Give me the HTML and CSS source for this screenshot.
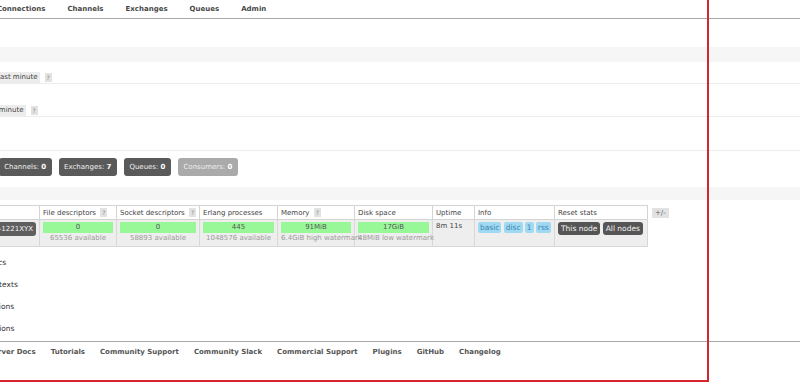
FILE: index.html
```html
<!DOCTYPE html>
<html lang="en">
<head>
    <meta charset="UTF-8">
    <title>RabbitMQ Management</title>
    <link rel="stylesheet" href="styles.css">
</head>
<body>
    <div class="page">
        <!-- top menu -->
        <ul class="menu">
            <li>Overview</li>
            <li>Connections</li>
            <li>Channels</li>
            <li>Exchanges</li>
            <li>Queues</li>
            <li>Admin</li>
        </ul>

        <h2 class="band band-totals">Totals</h2>

        <div class="chart chart-queued">
            <span class="chart-title">Queued messages last minute</span>
            <span class="help">?</span>
        </div>
        <div class="chart chart-rates">
            <span class="chart-title">Message rates last minute</span>
            <span class="help">?</span>
        </div>
        <div class="chart chart-counts"></div>

        <!-- global counts -->
        <div class="counts">
            <span class="badge">Connections: <b>0</b></span>
            <span class="badge">Channels: <b>0</b></span>
            <span class="badge">Exchanges: <b>7</b></span>
            <span class="badge">Queues: <b>0</b></span>
            <span class="badge badge-off">Consumers: <b>0</b></span>
        </div>

        <h2 class="band band-nodes">Nodes</h2>

        <div class="nodes">
            <table>
                <colgroup>
                    <col class="c-name">
                    <col class="c-77">
                    <col class="c-83">
                    <col class="c-78">
                    <col class="c-77">
                    <col class="c-78">
                    <col class="c-42">
                    <col class="c-80">
                    <col class="c-93">
                </colgroup>
                <tr class="head">
                    <th>Name</th>
                    <th>File descriptors <span class="help">?</span></th>
                    <th>Socket descriptors <span class="help">?</span></th>
                    <th>Erlang processes</th>
                    <th>Memory <span class="help">?</span></th>
                    <th>Disk space</th>
                    <th>Uptime</th>
                    <th>Info</th>
                    <th>Reset stats</th>
                </tr>
                <tr class="row">
                    <td class="name"><span class="node">rabbit@DESKTOP-1221XYX</span></td>
                    <td><div class="bar">0</div><div class="sub">65536 available</div></td>
                    <td><div class="bar">0</div><div class="sub">58893 available</div></td>
                    <td><div class="bar">445</div><div class="sub">1048576 available</div></td>
                    <td><div class="bar">91MiB</div><div class="sub">6.4GiB high watermark</div></td>
                    <td><div class="bar">17GiB</div><div class="sub">48MiB low watermark</div></td>
                    <td class="plain">8m 11s</td>
                    <td class="plain">
                        <span class="tag">basic</span>
                        <span class="tag">disc</span>
                        <span class="tag">1</span>
                        <span class="tag">rss</span>
                    </td>
                    <td class="plain">
                        <span class="btn">This node</span>
                        <span class="btn">All nodes</span>
                    </td>
                </tr>
            </table>
            <span class="toggle">+/-</span>
        </div>

        <!-- collapsed sections -->
        <div class="sections">
            <h2>Churn statistics</h2>
            <h2>Ports and contexts</h2>
            <h2>Export definitions</h2>
            <h2>Import definitions</h2>
        </div>

        <div class="footer">
            <a>HTTP API</a>
            <a>Server Docs</a>
            <a>Tutorials</a>
            <a>Community Support</a>
            <a>Community Slack</a>
            <a>Commercial Support</a>
            <a>Plugins</a>
            <a>GitHub</a>
            <a>Changelog</a>
        </div>
    </div>

    <!-- red highlight frame drawn over the screenshot -->
    <div class="frame"></div>
</body>
</html>
```

FILE: styles.css
```css
body {
    font-family: "DejaVu Sans", Verdana, sans-serif;
    font-size: 7px;
    color: #444;
    background: #fff;
    margin: 0;
    width: 800px;
    height: 385px;
    overflow: hidden;
    position: relative;
}
.page {
    margin-left: -100px;
    width: 900px;
}
.menu {
    list-style: none;
    margin: 0;
    padding: 0 0 0 38px;
    height: 18px;
    line-height: 18px;
    border-bottom: 1px solid #a8a8a8;
    display: flex;
    gap: 22px;
    font-weight: bold;
    color: #484848;
}
.band {
    margin: 0;
    font-size: 8px;
    font-weight: normal;
    background: #f6f6f6;
    padding-left: 10px;
}
.band-totals {
    margin-top: 28px;
    height: 15px;
    line-height: 15px;
}
.chart {
    border-bottom: 1px solid #ececec;
    padding-left: 29px;
    line-height: 12px;
    display: flex;
    align-items: center;
    gap: 5px;
}
.chart-queued {
    padding-top: 9px;
    height: 12px;
}
.chart-rates {
    padding-top: 20px;
    height: 12px;
}
.chart-counts {
    height: 33px;
}
.chart-title {
    background: #ececec;
    padding: 0 2px;
    line-height: 11px;
}
.help {
    display: inline-block;
    background: #e2e2e2;
    color: #888;
    font-size: 6px;
    line-height: 9px;
    padding: 0 2px;
    font-weight: normal;
}
.counts {
    margin-top: 7px;
    padding-left: 28px;
    display: flex;
    gap: 7px;
}
.badge {
    background: #5a5a5a;
    color: #eee;
    line-height: 18px;
    padding: 0 5.5px;
    border-radius: 3px;
}
.badge b {
    color: #fff;
}
.badge-off {
    background: #aaa;
}
.band-nodes {
    margin-top: 11px;
    height: 13px;
    line-height: 13px;
}
.nodes {
    margin-top: 5px;
    padding-left: 20px;
    display: flex;
    align-items: flex-start;
    gap: 4px;
}
table {
    border-collapse: collapse;
    table-layout: fixed;
    width: 727px;
}
.c-name { width: 119px; }
.c-77 { width: 77px; }
.c-83 { width: 83px; }
.c-78 { width: 78px; }
.c-42 { width: 42px; }
.c-80 { width: 80px; }
.c-93 { width: 93px; }
th {
    font-weight: normal;
    text-align: left;
    height: 13px;
    padding: 0 3px;
    border: 1px solid #d4d4d4;
    white-space: nowrap;
    overflow: hidden;
    background: #fff;
}
th .help {
    margin-left: 2px;
}
.row td {
    background: #eee;
    border: 1px solid #d8d8d8;
    border-top: none;
    height: 24px;
    padding: 0 3px;
    vertical-align: top;
}
.row td.name {
    text-align: right;
    padding-top: 2px;
}
.node {
    display: inline-block;
    background: #5f5f5f;
    color: #f4f4f4;
    line-height: 14px;
    padding: 0 3px;
    border-radius: 3px;
}
.bar {
    margin-top: 2px;
    background: #98f898;
    height: 11px;
    line-height: 11px;
    text-align: center;
    color: #555;
}
.sub {
    text-align: center;
    white-space: nowrap;
    color: #9a9a9a;
    line-height: 10px;
}
.row td.plain {
    padding-top: 2px;
    white-space: nowrap;
}
.tag {
    display: inline-block;
    background: #9fd9f2;
    color: #3b86b4;
    font-size: 7.5px;
    line-height: 11px;
    padding: 0 2px;
    border-radius: 2px;
}
.btn {
    display: inline-block;
    background: #555;
    color: #f2f2f2;
    font-size: 7.5px;
    line-height: 13px;
    padding: 0 3px;
    border-radius: 3px;
}
.toggle {
    margin-top: 3px;
    background: #e2e2e2;
    color: #666;
    line-height: 10px;
    padding: 0 3px;
}
.sections {
    margin-top: 5px;
    padding-left: 48px;
}
.sections h2 {
    margin: 0;
    font-size: 7.5px;
    font-weight: normal;
    line-height: 22px;
    height: 22px;
    color: #333;
}
.footer {
    margin-top: 1px;
    border-top: 1px solid #a8a8a8;
    padding-left: 37px;
    line-height: 20px;
    display: flex;
    gap: 15px;
    font-weight: bold;
    color: #555;
}
.frame {
    position: absolute;
    left: -10px;
    top: -10px;
    width: 719px;
    height: 392px;
    box-sizing: border-box;
    border: 2px solid #d4262c;
    pointer-events: none;
}
```
